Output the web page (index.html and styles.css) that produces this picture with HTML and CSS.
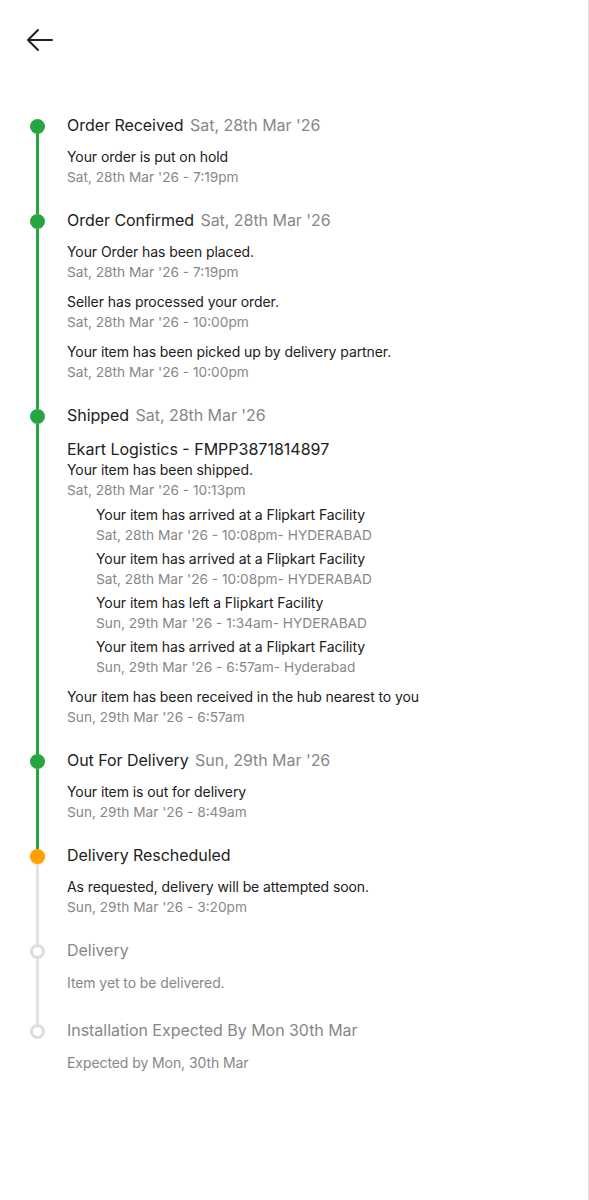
FILE: index.html
```html
<!DOCTYPE html>
<html lang="en">
<head>
<meta charset="utf-8">
<title>Order tracking</title>
<link rel="stylesheet" href="styles.css">
</head>
<body>
<div class="page">
  <header class="topbar">
    <button class="back" aria-label="Back">
      <svg width="28" height="24" viewBox="0 0 28 24" fill="none" stroke="#212121" stroke-width="2" stroke-linecap="round" stroke-linejoin="round"><path d="M26 12H2M12 2L2 12l10 10"/></svg>
    </button>
  </header>

  <section class="timeline">
    <div class="step">
      <div class="rail"><span class="seg seg-none"></span><span class="dot done"></span><span class="line green"></span></div>
      <div class="content">
        <div class="title">Order Received <span class="tdate">Sat, 28th Mar '26</span></div>
        <div class="items">
          <div class="item"><div class="itext">Your order is put on hold</div><div class="idate">Sat, 28th Mar '26 - 7:19pm</div></div>
        </div>
      </div>
    </div>

    <div class="step">
      <div class="rail"><span class="seg green"></span><span class="dot done"></span><span class="line green"></span></div>
      <div class="content">
        <div class="title">Order Confirmed <span class="tdate">Sat, 28th Mar '26</span></div>
        <div class="items">
          <div class="item"><div class="itext">Your Order has been placed.</div><div class="idate">Sat, 28th Mar '26 - 7:19pm</div></div>
          <div class="item"><div class="itext">Seller has processed your order.</div><div class="idate">Sat, 28th Mar '26 - 10:00pm</div></div>
          <div class="item"><div class="itext">Your item has been picked up by delivery partner.</div><div class="idate">Sat, 28th Mar '26 - 10:00pm</div></div>
        </div>
      </div>
    </div>

    <div class="step">
      <div class="rail"><span class="seg green"></span><span class="dot done"></span><span class="line green"></span></div>
      <div class="content">
        <div class="title">Shipped <span class="tdate">Sat, 28th Mar '26</span></div>
        <div class="courier">Ekart Logistics - FMPP3871814897</div>
        <div class="item"><div class="itext">Your item has been shipped.</div><div class="idate">Sat, 28th Mar '26 - 10:13pm</div></div>
        <div class="nested">
          <div class="item"><div class="itext">Your item has arrived at a Flipkart Facility</div><div class="idate">Sat, 28th Mar '26 - 10:08pm- HYDERABAD</div></div>
          <div class="item"><div class="itext">Your item has arrived at a Flipkart Facility</div><div class="idate">Sat, 28th Mar '26 - 10:08pm- HYDERABAD</div></div>
          <div class="item"><div class="itext">Your item has left a Flipkart Facility</div><div class="idate">Sun, 29th Mar '26 - 1:34am- HYDERABAD</div></div>
          <div class="item"><div class="itext">Your item has arrived at a Flipkart Facility</div><div class="idate">Sun, 29th Mar '26 - 6:57am- Hyderabad</div></div>
        </div>
        <div class="item"><div class="itext">Your item has been received in the hub nearest to you</div><div class="idate">Sun, 29th Mar '26 - 6:57am</div></div>
      </div>
    </div>

    <div class="step">
      <div class="rail"><span class="seg green"></span><span class="dot done"></span><span class="line green"></span></div>
      <div class="content">
        <div class="title">Out For Delivery <span class="tdate">Sun, 29th Mar '26</span></div>
        <div class="items">
          <div class="item"><div class="itext">Your item is out for delivery</div><div class="idate">Sun, 29th Mar '26 - 8:49am</div></div>
        </div>
      </div>
    </div>

    <div class="step">
      <div class="rail"><span class="seg green"></span><span class="dot warn"></span><span class="line grey"></span></div>
      <div class="content">
        <div class="title">Delivery Rescheduled</div>
        <div class="items">
          <div class="item"><div class="itext">As requested, delivery will be attempted soon.</div><div class="idate">Sun, 29th Mar '26 - 3:20pm</div></div>
        </div>
      </div>
    </div>

    <div class="step pending">
      <div class="rail"><span class="seg grey"></span><span class="dot open"></span><span class="line grey"></span></div>
      <div class="content">
        <div class="title">Delivery</div>
        <div class="items">
          <div class="item"><div class="itext">Item yet to be delivered.</div></div>
        </div>
      </div>
    </div>

    <div class="step pending last">
      <div class="rail"><span class="seg grey"></span><span class="dot open"></span></div>
      <div class="content">
        <div class="title">Installation Expected By Mon 30th Mar</div>
        <div class="items">
          <div class="item"><div class="itext">Expected by Mon, 30th Mar</div></div>
        </div>
      </div>
    </div>
  </section>
</div>
</body>
</html>
```

FILE: styles.css
```css
* { box-sizing: border-box; }
html, body { margin: 0; padding: 0; background: #fff; }
body {
  font-family: Inter, "Noto Sans", "Liberation Sans", sans-serif;
  color: #212121;
}
.page {
  min-height: 1200px;
  border-right: 1px solid #e2e2e2;
}
.topbar {
  height: 114px;
  padding: 28px 0 0 26px;
}
.back {
  border: 0;
  background: none;
  padding: 0;
  display: block;
  width: 28px;
  height: 24px;
}
.back svg { display: block; }

.timeline { padding-left: 30px; padding-right: 10px; }

.step {
  display: flex;
  gap: 23px;
}
.rail {
  width: 14px;
  flex: none;
  display: flex;
  flex-direction: column;
  align-items: center;
}
.seg { width: 3px; height: 5px; flex: none; }
.line { width: 3px; flex: 1; }
.green { background: #26a541; }
.grey { background: #e4e4e4; }
.seg-none { background: transparent; }
.dot {
  width: 15px;
  height: 15px;
  border-radius: 50%;
  flex: none;
}
.dot.done { background: #26a541; }
.dot.warn { background: #ff9f00; box-shadow: 0 1px 2px rgba(255,159,0,0.35); }
.dot.open { background: #fff; border: 3px solid #dcdcdc; }

.content {
  flex: 1;
  padding-bottom: 22px;
}
.title {
  font-size: 16px;
  line-height: 22px;
  color: #212121;
  letter-spacing: -0.04px;
}
.tdate { color: #878787; margin-left: 2px; }
.items {
  display: flex;
  flex-direction: column;
  gap: 10px;
  margin-top: 11px;
}
.itext, .idate {
  font-size: 14px;
  line-height: 20px;
}
.itext { letter-spacing: -0.08px; }
.idate { color: #878787; font-size: 13.7px; }

.courier {
  font-size: 16px;
  line-height: 22px;
  margin-top: 12px;
}
.nested {
  display: flex;
  flex-direction: column;
  gap: 4px;
  padding-left: 29px;
  margin: 5px 0 10px;
}

.pending .title { color: #878787; }
.pending .itext { color: #878787; }
.pending .content { padding-bottom: 26px; }
.pending .items { margin-top: 12px; }
.last .content { padding-bottom: 0; }
```
